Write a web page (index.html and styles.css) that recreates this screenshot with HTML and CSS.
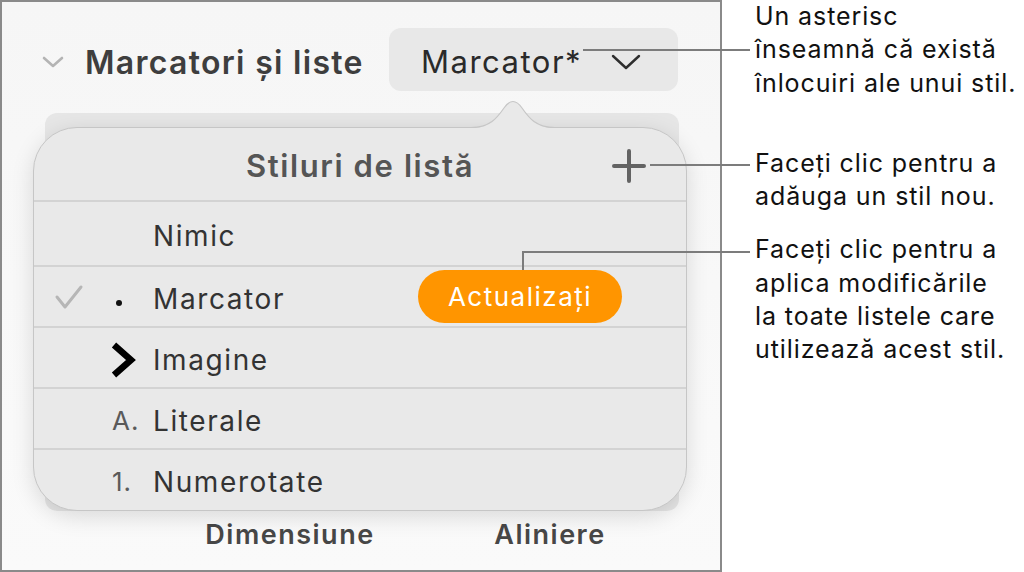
FILE: index.html
```html
<!DOCTYPE html>
<html>
<head>
  <meta charset="utf-8"/>
  <title>Stiluri de listă</title>
  <link rel="stylesheet" href="styles.css">
</head>
<body>
  <div class="page">
    <div class="panel">
      <div class="section-head">
        <svg class="disclosure" width="22" height="14" viewBox="0 0 22 14">
          <path d="M2 3 L11 11 L20 3" fill="none" stroke="#b4b4b4" stroke-width="2.6" stroke-linecap="round" stroke-linejoin="round"/>
        </svg>
        <span class="section-title">Marcatori și liste</span>
        <div class="style-picker">
          <span>Marcator*</span>
          <svg width="30" height="16" viewBox="0 0 30 16">
            <path d="M2 2 L15 14 L28 2" fill="none" stroke="#2e2e2e" stroke-width="2.4" stroke-linecap="round" stroke-linejoin="round"/>
          </svg>
        </div>
      </div>

      <div class="under-box"></div>

      <div class="col-labels">
        <span>Dimensiune</span>
        <span>Aliniere</span>
      </div>

      <!-- popover with list styles -->
      <div class="popover">
        <svg class="pop-arrow" width="84" height="32" viewBox="0 0 84 32">
          <path d="M0 32 C19 32 26 22 33 12 Q42 -1 51 12 C58 22 65 32 84 32 Z" fill="#e9e9e9"/>
          <path d="M0 31.5 C19 31.5 26 22 33 12 Q42 -1 51 12 C58 22 65 31.5 84 31.5" fill="none" stroke="#c6c6c6" stroke-width="1.2"/>
        </svg>
        <div class="pop-body">
          <div class="pop-head">
            <span class="pop-title">Stiluri de listă</span>
            <svg class="plus" width="36" height="36" viewBox="0 0 36 36">
              <path d="M18 3 V33 M3 18 H33" stroke="#636363" stroke-width="4" stroke-linecap="round"/>
            </svg>
          </div>
          <div class="row first">
            <span class="check"></span>
            <span class="mark"></span>
            <span class="label">Nimic</span>
          </div>
          <div class="row">
            <span class="check">
              <svg width="30" height="26" viewBox="0 0 30 26">
                <path d="M3 13 L11 23 L27 3" fill="none" stroke="#b6b6b6" stroke-width="3" stroke-linecap="round" stroke-linejoin="round"/>
              </svg>
            </span>
            <span class="mark"><span class="dot"></span></span>
            <span class="label">Marcator</span>
            <span class="update-btn">Actualizați</span>
          </div>
          <div class="row">
            <span class="check"></span>
            <span class="mark">
              <svg width="28" height="38" viewBox="0 0 28 38">
                <path d="M4 4 L21 19 L4 34" fill="none" stroke="#000" stroke-width="6.5" stroke-linejoin="miter"/>
              </svg>
            </span>
            <span class="label">Imagine</span>
          </div>
          <div class="row">
            <span class="check"></span>
            <span class="mark glyph">A.</span>
            <span class="label">Literale</span>
          </div>
          <div class="row">
            <span class="check"></span>
            <span class="mark glyph">1.</span>
            <span class="label">Numerotate</span>
          </div>
        </div>
      </div>
    </div>

    <div class="notes">
      <p class="note note-1">Un asterisc<br>înseamnă că există<br>înlocuiri ale unui stil.</p>
      <p class="note note-2">Faceți clic pentru a<br>adăuga un stil nou.</p>
      <p class="note note-3">Faceți clic pentru a<br>aplica modificările<br>la toate listele care<br>utilizează acest stil.</p>
    </div>

    <!-- callout leader lines -->
    <div class="leader" style="left:583px; top:49px; width:167px;"></div>
    <div class="leader" style="left:650px; top:164px; width:100px;"></div>
    <div class="leader" style="left:522px; top:251px; width:228px;"></div>
    <div class="leader vert" style="left:522px; top:251px; height:19px;"></div>
  </div>
</body>
</html>
```

FILE: styles.css
```css
body {
  margin: 0;
  background: #fff;
  font-family: Inter, "Noto Sans", sans-serif;
  color: #222;
}
.page {
  position: relative;
  display: flex;
  width: 1024px;
  height: 572px;
}
.panel {
  position: relative;
  box-sizing: border-box;
  width: 722px;
  height: 572px;
  border: 2px solid #8a8a8a;
  background: linear-gradient(#f6f6f6, #fafafa);
  display: flex;
  flex-direction: column;
}
.section-head {
  display: flex;
  align-items: center;
  padding-top: 26px;
  padding-left: 40px;
}
.disclosure {
  margin-right: 21px;
  margin-top: 4px;
}
.section-title {
  font-size: 32px;
  font-weight: 600;
  color: #3e3e3e;
  letter-spacing: 1.3px;
  margin-top: 5px;
}
.style-picker {
  margin-left: auto;
  margin-right: 42px;
  box-sizing: border-box;
  width: 289px;
  height: 63px;
  padding: 0 37px 0 32px;
  border-radius: 12px;
  background: #e8e8e8;
  display: flex;
  align-items: center;
  justify-content: space-between;
  font-size: 31px;
  letter-spacing: 1.5px;
  color: #2a2a2a;
}
.style-picker span {
  margin-top: 4px;
}
.style-picker svg {
  margin-top: 4px;
}
.under-box {
  margin: 22px 41px 0 43px;
  height: 398px;
  border-radius: 12px;
  background: #e6e6e6;
}
.col-labels {
  display: flex;
  padding-left: 188px;
  gap: 60px;
  margin-top: 8px;
}
.col-labels span {
  width: 200px;
  text-align: center;
  font-size: 27px;
  font-weight: 600;
  letter-spacing: 1.5px;
  color: #474747;
  line-height: 32px;
}

.popover {
  position: absolute;
  left: 31px;
  top: 125px;
  box-sizing: border-box;
  width: 654px;
  height: 384px;
  border: 1px solid #c6c6c6;
  border-radius: 44px;
  background: #e9e9e9;
  box-shadow: 0 6px 22px rgba(0,0,0,0.13);
}
.pop-arrow {
  position: absolute;
  left: 437px;
  top: -32px;
}
.pop-body {
  height: 100%;
  border-radius: 43px;
  overflow: hidden;
}
.pop-head {
  position: relative;
  height: 72px;
  display: flex;
  align-items: center;
  justify-content: center;
}
.pop-title {
  font-size: 31px;
  font-weight: 600;
  letter-spacing: 1.6px;
  color: #555;
  margin-top: 2px;
}
.plus {
  position: absolute;
  right: 39px;
  top: 20px;
}
.row {
  display: flex;
  align-items: center;
  height: 59px;
  border-top: 2px solid #d3d3d3;
  padding-left: 20px;
  font-size: 28px;
  letter-spacing: 1.6px;
  color: #333;
}
.row.first {
  height: 63px;
}
.check {
  width: 58px;
  display: flex;
  align-items: center;
}
.mark {
  width: 41px;
  display: flex;
  align-items: center;
  margin-top: 4px;
}
.mark svg {
  margin-left: -2px;
}
.dot {
  width: 6px;
  height: 6px;
  border-radius: 50%;
  background: #111;
  margin-left: 4px;
  margin-top: 8px;
}
.glyph {
  color: #5a5a5a;
  font-size: 26px;
  letter-spacing: 1px;
}
.label {
  color: #333;
  margin-top: 5px;
}
.update-btn {
  margin-left: auto;
  margin-right: 64px;
  box-sizing: border-box;
  width: 204px;
  height: 53px;
  border-radius: 27px;
  background: #ff9500;
  color: #fff;
  font-size: 26px;
  letter-spacing: 1.5px;
  display: flex;
  align-items: center;
  justify-content: center;
}

.notes {
  padding-left: 33px;
}
.note {
  margin: 0;
  font-size: 25px;
  letter-spacing: 0.9px;
  line-height: 33.3px;
  color: #111;
}
.note-1 {
  margin-top: 0;
}
.note-2 {
  margin-top: 47px;
}
.note-3 {
  margin-top: 20px;
}
.leader {
  position: absolute;
  height: 2px;
  background: #7c7c7c;
}
.leader.vert {
  width: 2px;
}
```
